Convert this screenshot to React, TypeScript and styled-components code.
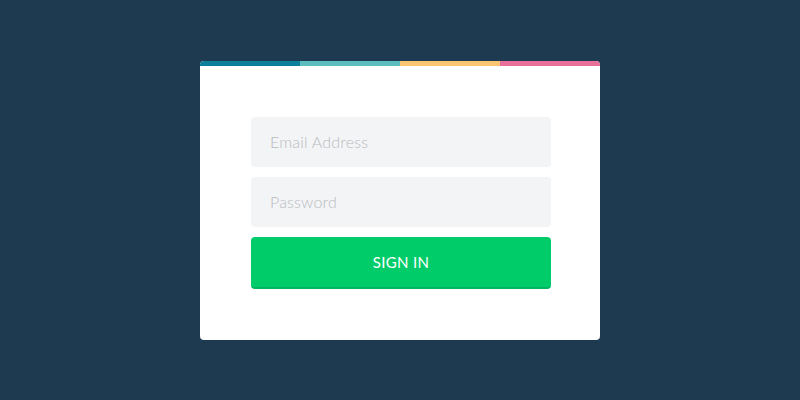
import React from "react";
import styled, { createGlobalStyle } from "styled-components";

const Global = createGlobalStyle`
  html, body { margin: 0; padding: 0; background: #1e3a50; }
  body { font-family: "Lato", "Open Sans", sans-serif; }
`;

const Page = styled.div`
  width: 800px;
  height: 400px;
  display: flex;
  align-items: center;
  justify-content: center;
`;

const Card = styled.div`
  width: 400px;
  background: #fff;
  border-radius: 4px;
  overflow: hidden;
  display: flex;
  flex-direction: column;
`;

const Stripe = styled.div`
  display: grid;
  grid-template-columns: repeat(4, 1fr);
  height: 5px;
`;

const Seg = styled.div<{ $c: string }>`
  background: ${(p) => p.$c};
`;

const Form = styled.form`
  display: flex;
  flex-direction: column;
  gap: 10px;
  padding: 51px 49px 51px 51px;
`;

const Input = styled.input`
  box-sizing: border-box;
  width: 300px;
  height: 50px;
  border: none;
  border-radius: 4px;
  background: #f3f4f6;
  padding: 0 19px;
  font-family: "Lato", "Open Sans", sans-serif;
  font-weight: 300;
  font-size: 16px;
  letter-spacing: 0.2px;
  color: #555;
  outline: none;
  &::placeholder { color: #b9bbbe; }
`;

const Button = styled.button`
  box-sizing: border-box;
  width: 300px;
  height: 52px;
  border: none;
  border-bottom: 2px solid #00b560;
  border-radius: 4px;
  background: #00cc6a;
  color: #fff;
  font-family: "Lato", "Open Sans", sans-serif;
  font-weight: 400;
  font-size: 15px;
  letter-spacing: 0.3px;
  padding: 1px 0 0;
  cursor: pointer;
`;

export default function App() {
  return (
    <>
      <Global />
      <Page>
        <Card>
          <Stripe>
            <Seg $c="#0e7f9a" />
            <Seg $c="#5bbdbd" />
            <Seg $c="#fcc572" />
            <Seg $c="#e86f9a" />
          </Stripe>
          <Form onSubmit={(e) => e.preventDefault()}>
            <Input type="email" placeholder="Email Address" />
            <Input type="password" placeholder="Password" />
            <Button type="submit">SIGN IN</Button>
          </Form>
        </Card>
      </Page>
    </>
  );
}
